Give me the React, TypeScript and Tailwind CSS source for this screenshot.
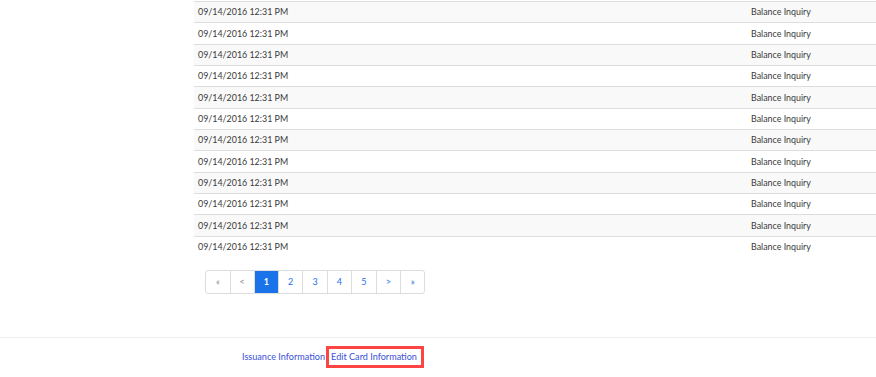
import React from "react";

const rows = Array.from({ length: 12 }, (_, i) => i);
const pages = ["«", "<", "1", "2", "3", "4", "5", ">", "»"];

export default function App() {
  return (
    <div className="w-[876px] h-[377px] bg-white overflow-hidden font-['Lato',sans-serif] text-[#3a3a3a]">
      <div className="ml-[194px] pt-[1px]">
        {rows.map((i) => (
          <div
            key={i}
            className={`flex items-center h-[21.33px] border-t border-[#ddd] text-[8.9px] ${
              i % 2 === 0 ? "bg-[#f9f9f9]" : "bg-white"
            }`}
          >
            <div className="w-[553px] pl-[4px]">09/14/2016 12:31 PM</div>
            <div className="pl-[4px]">Balance Inquiry</div>
          </div>
        ))}
        <div className="ml-[11px] mt-[13px] flex w-fit rounded-[3px] border border-[#ddd] overflow-hidden text-[9px]">
          {pages.map((p, i) => (
            <div
              key={i}
              className={`${i < 2 ? "w-[23.8px]" : "w-[24.4px]"} h-[22px] flex items-center justify-center ${
                i > 0 ? "border-l border-[#ddd]" : ""
              } ${
                p === "1"
                  ? "bg-[#1a73e8] text-white font-bold"
                  : i < 2
                  ? "text-[#888]"
                  : "text-[#1a73e8]"
              }`}
            >
              {p}
            </div>
          ))}
        </div>
      </div>
      <div className="mt-[43px] border-t border-[#eee] pt-[8px] flex">
        <div className="ml-[242px] flex items-center text-[9.1px] text-[#3a50d6]">
          <span className="mr-[1px]">Issuance Information</span>
          <span className="border-[3px] border-[#f44] pl-[2px] pr-[4px] h-[22px] flex items-center">Edit Card Information</span>
        </div>
      </div>
    </div>
  );
}
